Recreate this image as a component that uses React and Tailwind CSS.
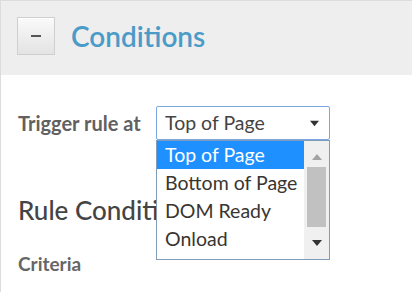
function Tri({ down, color, w = 10, h = 6 }) {
  return (
    <svg width={w} height={h} viewBox="0 0 10 6" className="block">
      <polygon points={down ? "0,0 10,0 5,6" : "0,6 10,6 5,0"} fill={color} />
    </svg>
  );
}

export default function App() {
  const items = ["Top of Page", "Bottom of Page", "DOM Ready", "Onload"];
  return (
    <div
      className="w-[412px] h-[292px] bg-white border-l border-t border-[#dcdcdc] overflow-hidden"
      style={{ fontFamily: "Lato, 'Liberation Sans', sans-serif" }}
    >
      <div className="h-[74px] bg-[#eeeeee] flex items-start pt-4 pl-4 gap-4">
        <button className="w-[38px] h-[38px] border border-[#cfcfcf] bg-gradient-to-b from-[#fafafa] to-[#e3e3e3] flex items-center justify-center shadow-[inset_0_1px_0_#fff]">
          <span className="block w-[10px] h-[2px] bg-[#555]" />
        </button>
        <div className="text-[28px] leading-[38px] font-semibold text-[#4a9bc8]">Conditions</div>
      </div>
      <div className="pl-[17px] pt-[31px]">
        <div className="flex items-center">
          <div className="w-[138px] text-[20px] font-bold text-[#616161]">Trigger rule at</div>
          <div className="relative">
            <div className="w-[174px] h-[34px] border border-[#7aa7df] rounded-[2px] bg-white flex items-center pl-2 pr-[10px] justify-between">
              <span className="text-[19.5px] text-[#444]">Top of Page</span>
              <Tri down color="#333" w={9} h={7} />
            </div>
            <div className="absolute left-0 top-[34px] w-[174px] h-[120px] border border-[#7f9db9] bg-white flex z-10">
              <div className="flex-1 flex flex-col">
                {items.map((t, i) => (
                  <div
                    key={t}
                    className={
                      i === 0
                        ? "h-[28px] pl-[8px] flex items-center text-[19.5px] bg-[#1e90ff] text-white"
                        : "h-[28px] pl-[8px] flex items-center text-[19.5px] text-[#3a3530]"
                    }
                  >
                    {t}
                  </div>
                ))}
              </div>
              <div className="w-[25px] bg-[#f0f0f0] flex flex-col items-center">
                <div className="h-[19px] flex items-end justify-center">
                  <Tri color="#a3a3a3" />
                </div>
                <div className="mt-[7px] w-[19px] h-[60px] bg-[#c1c1c1]" />
                <div className="flex-1 flex items-center justify-center">
                  <Tri down color="#333" />
                </div>
              </div>
            </div>
          </div>
        </div>
        <div className="mt-[53px] text-[26px] text-[#444] font-medium leading-[34px]">Rule Conditions</div>
        <div className="mt-[23px] text-[19px] font-bold text-[#666]">Criteria</div>
      </div>
    </div>
  );
}
